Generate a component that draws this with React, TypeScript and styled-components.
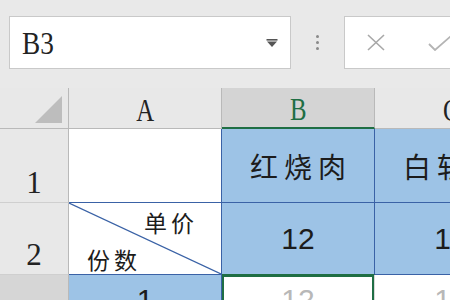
import React from "react";
import styled, { createGlobalStyle } from "styled-components";

const GlobalStyle = createGlobalStyle`
  html, body {
    margin: 0;
    padding: 0;
    background: #e9e9e9;
    overflow: hidden;
  }
  #root {
    width: 450px;
    height: 300px;
    overflow: hidden;
  }
`;

const BLUE = "#9dc3e6";
const DARK_BLUE = "#3a62a6";
const GREEN = "#1f6e44";
const GRID = "#d9d9d9";
const HEAD_LINE = "#b9b9b9";

const Screen = styled.div`
  width: 450px;
  height: 300px;
  display: flex;
  flex-direction: column;
  background: #e9e9e9;
  overflow: hidden;
`;

const Toolbar = styled.div`
  flex-shrink: 0;
  height: 88px;
  box-sizing: border-box;
  padding: 16px 0 0 9px;
  display: flex;
  align-items: flex-start;
`;

const NameBox = styled.div`
  flex-shrink: 0;
  width: 282px;
  height: 53px;
  box-sizing: border-box;
  background: #fff;
  border: 1px solid #c9c9c9;
  display: flex;
  align-items: center;
  justify-content: space-between;
  padding: 2px 12px 0 12px;
`;

const SerifText = styled.span<{ $size?: number; $color?: string }>`
  display: inline-block;
  font-family: "Liberation Serif", "Times New Roman", serif;
  font-size: ${(p) => p.$size ?? 31}px;
  line-height: 1;
  color: ${(p) => p.$color ?? "#222"};
  transform: scaleX(0.8);
  transform-origin: center;
`;

const NameText = styled(SerifText)`
  transform-origin: left center;
  transform: scaleX(0.88);
`;

const Dots = styled.div`
  flex-shrink: 0;
  width: 53px;
  height: 53px;
  display: flex;
  flex-direction: column;
  align-items: center;
  justify-content: center;
  gap: 3px;
`;

const Dot = styled.span`
  width: 3px;
  height: 3px;
  border-radius: 50%;
  background: #8a8a8a;
`;

const FormulaBox = styled.div`
  flex-shrink: 0;
  width: 140px;
  height: 53px;
  box-sizing: border-box;
  background: #fff;
  border: 1px solid #c9c9c9;
  border-right: none;
  display: flex;
  align-items: center;
  gap: 43px;
  padding-left: 22px;
`;

const Sheet = styled.div`
  flex-shrink: 0;
  display: grid;
  grid-template-columns: 69px 153px 153px 153px;
  grid-template-rows: 41px 74px 72px 72px;
`;

const HeadCell = styled.div<{ $bg?: string; $bottom?: string; $bottomWidth?: number }>`
  box-sizing: border-box;
  background: ${(p) => p.$bg ?? "#e8e8e8"};
  border-right: 1px solid ${HEAD_LINE};
  border-bottom: ${(p) => p.$bottomWidth ?? 1}px solid ${(p) => p.$bottom ?? HEAD_LINE};
  display: flex;
  align-items: center;
  justify-content: center;
  padding-top: 4px;
`;

const Corner = styled(HeadCell)`
  align-items: flex-end;
  justify-content: flex-end;
  padding: 0 6px 5px 0;
`;

const RowHead = styled.div<{ $bg?: string }>`
  box-sizing: border-box;
  background: ${(p) => p.$bg ?? "#e8e8e8"};
  border-right: 1px solid ${HEAD_LINE};
  border-bottom: 1px solid #cfcfcf;
  display: flex;
  align-items: flex-end;
  justify-content: center;
  padding-bottom: 4px;
`;

const Digit = styled.span`
  font-family: "Liberation Serif", "Times New Roman", serif;
  font-size: 31px;
  line-height: 1;
  color: #222;
`;

const Cell = styled.div<{
  $bg?: string;
  $right?: string;
  $bottom?: string;
  $top?: boolean;
  $selected?: boolean;
}>`
  position: relative;
  box-sizing: border-box;
  background: ${(p) => p.$bg ?? "#fff"};
  border-right: 1px solid ${(p) => p.$right ?? GRID};
  border-bottom: 1px solid ${(p) => p.$bottom ?? GRID};
  display: flex;
  align-items: ${(p) => (p.$top ? "flex-start" : "center")};
  justify-content: center;
  padding-top: ${(p) => (p.$top ? "10px" : "0")};
  box-shadow: ${(p) => (p.$selected ? `inset 0 0 0 2px ${GREEN}` : "none")};
  overflow: hidden;
`;

const CjkText = styled.span<{ $size?: number; $spacing?: number }>`
  font-family: "Noto Sans CJK SC", "Noto Sans", sans-serif;
  font-size: ${(p) => p.$size ?? 28}px;
  letter-spacing: ${(p) => p.$spacing ?? 6}px;
  padding-left: ${(p) => p.$spacing ?? 6}px;
  line-height: 1;
  color: #1c1c1c;
  white-space: nowrap;
`;

const Num = styled.span<{ $faint?: boolean }>`
  font-family: "Liberation Sans", Arial, sans-serif;
  font-size: 30px;
  line-height: 1;
  color: ${(p) => (p.$faint ? "#b8b8b8" : "#1c1c1c")};
`;

const Diagonal = styled(Cell)`
  flex-direction: column;
  align-items: stretch;
  justify-content: space-between;
  padding: 8px 27px 3px 18px;
`;

const DiagLine = styled.svg`
  position: absolute;
  left: 0;
  top: 0;
  width: 100%;
  height: 100%;
`;

const DiagTop = styled(CjkText)`
  align-self: flex-end;
  padding-left: 0;
  margin-right: -4px;
`;

const DiagBottom = styled(CjkText)`
  align-self: flex-start;
  padding-left: 0;
`;

export default function App() {
  return (
    <Screen>
      <GlobalStyle />
      <Toolbar>
        <NameBox>
          <NameText $size={31}>B3</NameText>
          <svg width="12" height="9" viewBox="0 0 12 9">
            <rect x="0.5" y="0" width="11" height="1.6" fill="#555" />
            <polygon points="1,2.6 11,2.6 6,8" fill="#555" />
          </svg>
        </NameBox>
        <Dots>
          <Dot />
          <Dot />
          <Dot />
        </Dots>
        <FormulaBox>
          <svg width="18" height="17" viewBox="0 0 18 17">
            <path d="M1 1 L17 16 M17 1 L1 16" stroke="#a8a8a8" strokeWidth="1.6" fill="none" />
          </svg>
          <svg width="24" height="16" viewBox="0 0 24 16">
            <path d="M1 9 L7 15 L23 1" stroke="#b4b4b4" strokeWidth="1.8" fill="none" />
          </svg>
        </FormulaBox>
      </Toolbar>

      <Sheet>
        <Corner>
          <svg width="27" height="27" viewBox="0 0 27 27">
            <polygon points="27,0 27,27 0,27" fill="#bdbdbd" />
          </svg>
        </Corner>
        <HeadCell>
          <SerifText>A</SerifText>
        </HeadCell>
        <HeadCell $bg="#d4d4d4" $bottom={GREEN} $bottomWidth={2}>
          <SerifText $color={GREEN}>B</SerifText>
        </HeadCell>
        <HeadCell>
          <SerifText>C</SerifText>
        </HeadCell>

        <RowHead>
          <Digit>1</Digit>
        </RowHead>
        <Cell $right={DARK_BLUE} $bottom={DARK_BLUE} />
        <Cell $bg={BLUE} $right={DARK_BLUE} $bottom={DARK_BLUE}>
          <CjkText>红烧肉</CjkText>
        </Cell>
        <Cell $bg={BLUE} $right={DARK_BLUE} $bottom={DARK_BLUE}>
          <CjkText>白斩鸡</CjkText>
        </Cell>

        <RowHead>
          <Digit>2</Digit>
        </RowHead>
        <Diagonal $right={DARK_BLUE} $bottom={DARK_BLUE}>
          <DiagLine viewBox="0 0 152 71" preserveAspectRatio="none">
            <line x1="0" y1="0" x2="152" y2="71" stroke={DARK_BLUE} strokeWidth="1.2" />
          </DiagLine>
          <DiagTop $size={23} $spacing={4}>单价</DiagTop>
          <DiagBottom $size={23} $spacing={4}>份数</DiagBottom>
        </Diagonal>
        <Cell $bg={BLUE} $right={DARK_BLUE} $bottom={GREEN}>
          <Num>12</Num>
        </Cell>
        <Cell $bg={BLUE} $right={DARK_BLUE} $bottom={DARK_BLUE}>
          <Num>15</Num>
        </Cell>

        <RowHead $bg="#d6d6d6">
          <Digit>3</Digit>
        </RowHead>
        <Cell $bg={BLUE} $right={DARK_BLUE} $bottom={DARK_BLUE} $top>
          <Num>1</Num>
        </Cell>
        <Cell $selected $top>
          <Num $faint>12</Num>
        </Cell>
        <Cell $top>
          <Num $faint>15</Num>
        </Cell>
      </Sheet>
    </Screen>
  );
}
